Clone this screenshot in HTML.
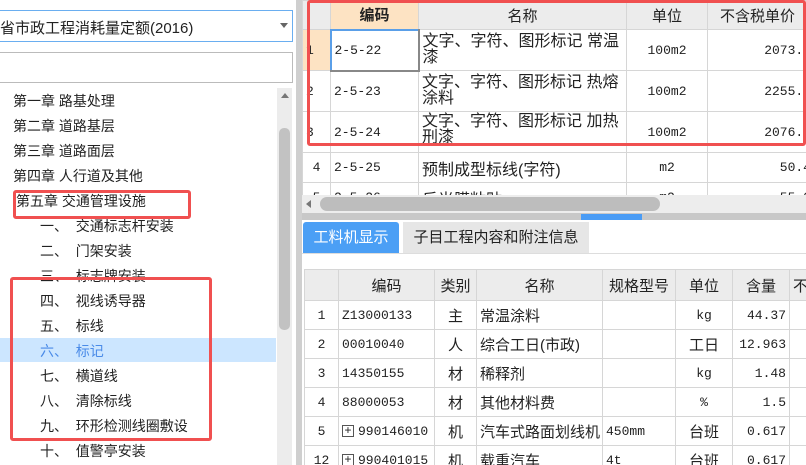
<!DOCTYPE html>
<html><head><meta charset="utf-8"><style>
*{margin:0;padding:0;box-sizing:border-box}
body{width:806px;height:465px;overflow:hidden;background:#fff;position:relative;font-family:"Liberation Sans","Noto Sans CJK SC",sans-serif;font-size:14px;color:#222}
.a{position:absolute}
.t{position:absolute;white-space:nowrap;font-size:14px}
table{border-collapse:collapse;position:absolute;table-layout:fixed}
td{border:1px solid #d6d6d6;font-size:14px;white-space:nowrap;overflow:hidden;padding:0 3px}
.h td{background:#ececec;text-align:center}
.m{font-family:"Liberation Mono","Noto Sans CJK SC",monospace;font-size:13px}
.red{position:absolute;border:3px solid #f05050;border-radius:3px}
.nm{white-space:normal;line-height:16px;font-size:16px;word-break:break-all}
</style></head><body>
<!-- left panel -->
<div class="a" style="left:-3px;top:10px;width:296px;height:32px;border:1px solid #6aaef0;background:#fff"></div>
<div class="t" style="left:0;top:17px;font-size:15px">省市政工程消耗量定额(2016)</div>
<div class="a" style="left:280px;top:23px;border:4px solid transparent;border-top:5px solid #666"></div>
<div class="a" style="left:-3px;top:52px;width:296px;height:31px;border:1px solid #bbb"></div>
<div class="a" style="left:277px;top:88px;width:15px;height:377px;background:#ececec"></div>
<div class="a" style="left:281px;top:93px;border:4px solid transparent;border-bottom:5px solid #777;border-top:0"></div>
<div class="a" style="left:279px;top:128px;width:11px;height:202px;background:#c2c2c2;border-radius:5px"></div>
<div class="a" style="left:296px;top:0;width:6px;height:465px;background:#cfcfcf"></div>
<div class="a" style="left:0;top:338px;width:276px;height:24px;background:#cce6ff"></div>
<div class="t" style="left:13px;top:91px">第一章 路基处理</div>
<div class="t" style="left:13px;top:116px">第二章 道路基层</div>
<div class="t" style="left:13px;top:141px">第三章 道路面层</div>
<div class="t" style="left:13px;top:166px">第四章 人行道及其他</div>
<div class="t" style="left:16px;top:191px">第五章 交通管理设施</div>
<div class="t" style="left:40px;top:216px">一、&nbsp;&nbsp;交通标志杆安装</div>
<div class="t" style="left:40px;top:241px">二、&nbsp;&nbsp;门架安装</div>
<div class="t" style="left:40px;top:266px">三、&nbsp;&nbsp;标志牌安装</div>
<div class="t" style="left:40px;top:291px">四、&nbsp;&nbsp;视线诱导器</div>
<div class="t" style="left:40px;top:316px">五、&nbsp;&nbsp;标线</div>
<div class="t" style="left:40px;top:341px;color:#4a8be8">六、&nbsp;&nbsp;标记</div>
<div class="t" style="left:40px;top:366px">七、&nbsp;&nbsp;横道线</div>
<div class="t" style="left:40px;top:391px">八、&nbsp;&nbsp;清除标线</div>
<div class="t" style="left:40px;top:416px">九、&nbsp;&nbsp;环形检测线圈敷设</div>
<div class="t" style="left:40px;top:441px">十、&nbsp;&nbsp;值警亭安装</div>
<div class="red" style="left:13px;top:190px;width:178px;height:29px"></div>
<div class="red" style="left:10px;top:277px;width:202px;height:164px"></div>

<!-- top right table -->
<div class="a" style="left:302px;top:0;width:504px;height:195px;overflow:hidden">
<table style="left:0;top:0;width:512px">
<colgroup><col style="width:28px"><col style="width:88px"><col style="width:208px"><col style="width:81px"><col style="width:107px"></colgroup>
<tr class="h" style="height:29px"><td></td><td style="background:#fde3c3;font-weight:bold;font-size:15px">编码</td><td style="font-size:15px">名称</td><td style="font-size:15px">单位</td><td style="text-align:left;padding-left:12px;font-size:15px">不含税单价</td></tr>
<tr style="height:41px"><td style="background:#fde3c3" class="m">1</td><td class="m" style="border:2px solid #5a9fe8;border-right-color:#888;border-bottom-color:#888">2-5-22</td><td class="nm">文字、字符、图形标记 常温漆</td><td class="m" style="text-align:center">100m2</td><td class="m" style="text-align:right">2073.3</td></tr>
<tr style="height:41px"><td class="m">2</td><td class="m">2-5-23</td><td class="nm">文字、字符、图形标记 热熔涂料</td><td class="m" style="text-align:center">100m2</td><td class="m" style="text-align:right">2255.8</td></tr>
<tr style="height:41px"><td class="m">3</td><td class="m">2-5-24</td><td class="nm" style="vertical-align:top;padding-top:2px">文字、字符、图形标记 加热刑漆</td><td class="m" style="text-align:center">100m2</td><td class="m" style="text-align:right">2076.3</td></tr>
<tr style="height:30px"><td class="m" style="text-align:center">4</td><td class="m">2-5-25</td><td style="font-size:16px">预制成型标线(字符)</td><td class="m" style="text-align:center">m2</td><td class="m" style="text-align:right">50.4</td></tr>
<tr style="height:30px"><td class="m" style="text-align:center">5</td><td class="m">2-5-26</td><td style="font-size:16px">反光膜粘贴</td><td class="m" style="text-align:center">m2</td><td class="m" style="text-align:right">55.0</td></tr>
</table></div>
<div class="a" style="left:302px;top:195px;width:504px;height:18px;background:#ededed"></div>
<div class="a" style="left:306px;top:200px;border:4px solid transparent;border-right:5px solid #777;border-left:0"></div>
<div class="a" style="left:320px;top:197px;width:340px;height:14px;background:#bdbdbd;border-radius:7px"></div>
<div class="a" style="left:302px;top:213px;width:504px;height:7px;background:#c8c8c8"></div>
<div class="a" style="left:581px;top:214px;width:61px;height:6px;background:#4a9cf5"></div>
<div class="red" style="left:307px;top:0;width:499px;height:146px"></div>

<!-- tabs -->
<div class="a" style="left:302px;top:220px;width:504px;height:48px;background:#fff"></div>
<div class="a" style="left:303px;top:222px;width:96px;height:31px;background:#4b9ff5;border-radius:3px 3px 0 0;color:#fff;font-size:15px;text-align:center;line-height:31px">工料机显示</div>
<div class="a" style="left:403px;top:222px;width:186px;height:31px;background:#e6e6e6;font-size:15px;text-align:center;line-height:31px">子目工程内容和附注信息</div>
<div class="a" style="left:302px;top:253px;width:504px;height:1px;background:#ddd"></div>

<!-- bottom table -->
<div class="a" style="left:302px;top:269px;width:504px;height:196px;overflow:hidden">
<table style="left:2px;top:0;width:520px">
<colgroup><col style="width:34px"><col style="width:96px"><col style="width:42px"><col style="width:126px"><col style="width:73px"><col style="width:57px"><col style="width:57px"><col style="width:35px"></colgroup>
<tr class="h" style="height:31px"><td style="font-size:15px"></td><td style="font-size:15px">编码</td><td style="font-size:15px">类别</td><td style="font-size:15px">名称</td><td style="font-size:15px">规格型号</td><td style="font-size:15px">单位</td><td style="font-size:15px">含量</td><td style="text-align:left;font-size:15px">不含</td></tr>
<tr style="height:29px"><td class="m" style="text-align:center">1</td><td class="m">Z13000133</td><td style="text-align:center;font-size:15px">主</td><td style="font-size:15px">常温涂料</td><td></td><td class="m" style="text-align:center">kg</td><td class="m" style="text-align:right">44.37</td><td></td></tr>
<tr style="height:29px"><td class="m" style="text-align:center">2</td><td class="m">00010040</td><td style="text-align:center;font-size:15px">人</td><td style="font-size:15px">综合工日(市政)</td><td></td><td style="text-align:center;font-size:15px">工日</td><td class="m" style="text-align:right">12.963</td><td></td></tr>
<tr style="height:29px"><td class="m" style="text-align:center">3</td><td class="m">14350155</td><td style="text-align:center;font-size:15px">材</td><td style="font-size:15px">稀释剂</td><td></td><td class="m" style="text-align:center">kg</td><td class="m" style="text-align:right">1.48</td><td></td></tr>
<tr style="height:29px"><td class="m" style="text-align:center">4</td><td class="m">88000053</td><td style="text-align:center;font-size:15px">材</td><td style="font-size:15px">其他材料费</td><td></td><td class="m" style="text-align:center">%</td><td class="m" style="text-align:right">1.5</td><td></td></tr>
<tr style="height:29px"><td class="m" style="text-align:center">5</td><td class="m"><span style="display:inline-block;width:12px;height:12px;border:1px solid #555;line-height:10px;text-align:center;font-size:12px;margin-right:4px;vertical-align:middle">+</span>990146010</td><td style="text-align:center;font-size:15px">机</td><td style="font-size:15px">汽车式路面划线机</td><td class="m">450mm</td><td style="text-align:center;font-size:15px">台班</td><td class="m" style="text-align:right">0.617</td><td></td></tr>
<tr style="height:29px"><td class="m" style="text-align:center">12</td><td class="m"><span style="display:inline-block;width:12px;height:12px;border:1px solid #555;line-height:10px;text-align:center;font-size:12px;margin-right:4px;vertical-align:middle">+</span>990401015</td><td style="text-align:center;font-size:15px">机</td><td style="font-size:15px">载重汽车</td><td class="m">4t</td><td style="text-align:center;font-size:15px">台班</td><td class="m" style="text-align:right">0.617</td><td></td></tr>
</table></div>
</body></html>
